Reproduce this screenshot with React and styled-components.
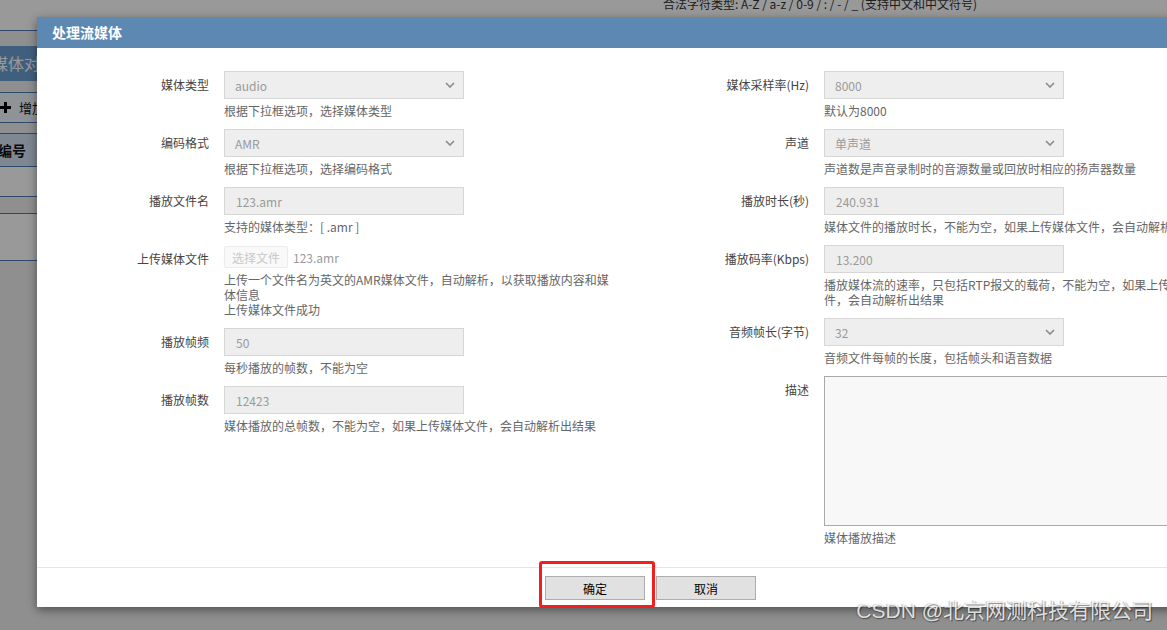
import styled, { createGlobalStyle } from "styled-components";

const leftFields = [
  { label: "媒体类型", kind: "select", value: "audio", help: ["根据下拉框选项，选择媒体类型"] },
  { label: "编码格式", kind: "select", value: "AMR", help: ["根据下拉框选项，选择编码格式"] },
  { label: "播放文件名", kind: "input", value: "123.amr", help: ["支持的媒体类型：[ .amr ]"] },
  {
    label: "上传媒体文件",
    kind: "file",
    value: "123.amr",
    help: ["上传一个文件名为英文的AMR媒体文件，自动解析，以获取播放内容和媒体信息", "上传媒体文件成功"],
  },
  { label: "播放帧频", kind: "input", value: "50", help: ["每秒播放的帧数，不能为空"] },
  {
    label: "播放帧数",
    kind: "input",
    value: "12423",
    help: ["媒体播放的总帧数，不能为空，如果上传媒体文件，会自动解析出结果"],
  },
];

const rightFields = [
  { label: "媒体采样率(Hz)", kind: "select", value: "8000", help: ["默认为8000"] },
  {
    label: "声道",
    kind: "select",
    value: "单声道",
    help: ["声道数是声音录制时的音源数量或回放时相应的扬声器数量"],
  },
  {
    label: "播放时长(秒)",
    kind: "input",
    value: "240.931",
    help: ["媒体文件的播放时长，不能为空，如果上传媒体文件，会自动解析出结果"],
  },
  {
    label: "播放码率(Kbps)",
    kind: "input",
    value: "13.200",
    help: ["播放媒体流的速率，只包括RTP报文的载荷，不能为空，如果上传媒体文件，会自动解析出结果"],
  },
  { label: "音频帧长(字节)", kind: "select", value: "32", help: ["音频文件每帧的长度，包括帧头和语音数据"] },
  { label: "描述", kind: "textarea", value: "", help: ["媒体播放描述"] },
];

function Control({ field }) {
  if (field.kind === "select") {
    return (
      <SelectWrap>
        <Select disabled value={field.value} onChange={() => {}}>
          <option>{field.value}</option>
        </Select>
        <Chevron width="10" height="6" viewBox="0 0 10 6">
          <path d="M1 1l4 4 4-4" fill="none" stroke="#8a8a8a" strokeWidth="1.6" />
        </Chevron>
      </SelectWrap>
    );
  }
  if (field.kind === "file") {
    return (
      <FileLine>
        <FileButton disabled>选择文件</FileButton>
        <FileName>{field.value}</FileName>
      </FileLine>
    );
  }
  if (field.kind === "textarea") {
    return <TextArea readOnly value={field.value} />;
  }
  return <TextInput readOnly value={field.value} />;
}

function FormColumn({ fields }) {
  return (
    <Column>
      {fields.map((field) => (
        <Row key={field.label}>
          <Label>{field.label}</Label>
          <Content>
            <Control field={field} />
            <Help>
              {field.help.map((line) => (
                <div key={line}>{line}</div>
              ))}
            </Help>
          </Content>
        </Row>
      ))}
    </Column>
  );
}

export default function App() {
  return (
    <>
      <GlobalStyle />
      <Screen>
        <Page>
          <TopBar>
            <Hint>合法字符类型: A-Z / a-z / 0-9 / : / - / _ (支持中文和中文符号)</Hint>
          </TopBar>
          <Panel>
            <PanelHead>媒体对象管理</PanelHead>
            <Toolbar>
              <AddButton>
                <svg width="11" height="11" viewBox="0 0 11 11">
                  <path d="M5.5 0v11M0 5.5h11" stroke="#000" strokeWidth="3" />
                </svg>
                增加
              </AddButton>
            </Toolbar>
            <TableHead>编号</TableHead>
            <TableRow $height={30} />
            <TableRow $height={48} $spaced />
          </Panel>
        </Page>

        <Overlay />

        <Modal>
          <ModalHeader>处理流媒体</ModalHeader>
          <ModalBody>
            <FormColumn fields={leftFields} />
            <FormColumn fields={rightFields} />
          </ModalBody>
          <ModalFooter>
            <Highlight>
              <FooterButton>确定</FooterButton>
            </Highlight>
            <FooterButton>取消</FooterButton>
          </ModalFooter>
        </Modal>

        <Watermark>CSDN @北京网测科技有限公司</Watermark>
      </Screen>
    </>
  );
}

const GlobalStyle = createGlobalStyle`
  html, body {
    margin: 0;
    padding: 0;
    overflow: hidden;
  }
  body {
    font-family: "Noto Sans CJK SC", "Noto Sans", sans-serif;
    font-size: 12px;
    color: #333;
  }
  * {
    box-sizing: border-box;
  }
`;

const Screen = styled.div`
  position: relative;
  width: 1167px;
  height: 630px;
  overflow: hidden;
  background: #efefef;
`;

const Page = styled.div`
  display: flex;
  flex-direction: column;
`;

const TopBar = styled.div`
  height: 31px;
  background: #fff;
  border-bottom: 1px solid #4e7cb2;
  overflow: hidden;
`;

const Hint = styled.div`
  margin: -3px 0 0 663px;
  font-size: 12px;
  line-height: 14px;
  color: #333;
`;

const Panel = styled.div`
  display: flex;
  flex-direction: column;
  width: 300px;
  margin: 15px 0 0 -8px;
`;

const PanelHead = styled.div`
  height: 35px;
  line-height: 35px;
  background: #6c9fd2;
  color: #fff;
  font-size: 16px;
`;

const Toolbar = styled.div`
  height: 31px;
  margin-top: 11px;
  display: flex;
  align-items: center;
  background: #eef5fd;
  border-top: 1px solid #4e7cb2;
  border-bottom: 1px solid #4e7cb2;
  padding-left: 8px;
`;

const AddButton = styled.div`
  display: flex;
  align-items: center;
  gap: 8px;
  font-size: 13px;
  color: #111;
`;

const TableHead = styled.div`
  height: 34px;
  margin-top: 10px;
  line-height: 32px;
  background: #d2e1f3;
  border-top: 1px solid #4e7cb2;
  border-bottom: 1px solid #4e7cb2;
  padding-left: 6px;
  font-size: 14px;
  font-weight: bold;
  color: #111;
`;

const TableRow = styled.div`
  height: ${(p) => p.$height}px;
  margin-top: ${(p) => (p.$spaced ? 16 : 0)}px;
  background: #fff;
  border-top: ${(p) => (p.$spaced ? "1px solid #4e7cb2" : "none")};
  border-bottom: 1px solid #4e7cb2;
`;

const Overlay = styled.div`
  position: absolute;
  inset: 0;
  background: rgba(0, 0, 0, 0.4);
`;

const Modal = styled.div`
  position: absolute;
  left: 37px;
  top: 17px;
  width: 1227px;
  background: #fff;
  box-shadow: 0 3px 9px rgba(0, 0, 0, 0.45);
`;

const ModalHeader = styled.div`
  height: 31px;
  padding-left: 15px;
  line-height: 31px;
  background: #5d88b2;
  color: #fff;
  font-size: 14px;
  font-weight: bold;
`;

const ModalBody = styled.div`
  display: grid;
  grid-template-columns: 600px 600px;
  height: 519px;
  padding-top: 23px;
`;

const Column = styled.div`
  display: flex;
  flex-direction: column;
`;

const Row = styled.div`
  display: flex;
  gap: 15px;
  margin-bottom: 11px;
`;

const Label = styled.div`
  width: 172px;
  flex-shrink: 0;
  text-align: right;
  line-height: 28px;
  font-size: 12px;
  color: #444;
`;

const Content = styled.div`
  width: 390px;
  display: flex;
  flex-direction: column;
`;

const fieldBox = `
  width: 240px;
  height: 28px;
  border: 1px solid #d6d6d6;
  background: #eeeeee;
  color: #9a9a9a;
  -webkit-text-fill-color: #9a9a9a;
  opacity: 1;
  font-family: "Noto Sans CJK SC", "Noto Sans", sans-serif;
  font-size: 12px;
  padding: 0 11px;
  margin: 0;
  border-radius: 0;
  outline: none;
`;

const TextInput = styled.input`
  ${fieldBox}
`;

const SelectWrap = styled.div`
  position: relative;
  width: 240px;
  height: 28px;
`;

const Select = styled.select`
  ${fieldBox}
  appearance: none;
  -webkit-appearance: none;
  padding-left: 10px;
`;

const Chevron = styled.svg`
  position: absolute;
  right: 9px;
  top: 11px;
`;

const FileLine = styled.div`
  display: flex;
  align-items: center;
  height: 22px;
  margin-top: 1px;
`;

const FileButton = styled.button`
  width: 64px;
  height: 22px;
  border: 1px solid #ececec;
  background: #f9f9f9;
  color: #c8c8c8;
  font-family: inherit;
  font-size: 12px;
  padding: 0;
  border-radius: 2px;
`;

const FileName = styled.span`
  margin-left: 5px;
  color: #9a9a9a;
  font-size: 12px;
`;

const TextArea = styled.textarea`
  width: 390px;
  height: 150px;
  border: 1px solid #a9a9a9;
  background: #f8f8f8;
  resize: none;
  margin: 0;
  outline: none;
`;

const Help = styled.div`
  margin-top: 4px;
  font-size: 12px;
  line-height: 15px;
  color: #666;
`;

const ModalFooter = styled.div`
  height: 40px;
  border-top: 1px solid #e5e5e5;
  display: flex;
  justify-content: center;
  align-items: flex-start;
  gap: 11px;
  padding-top: 8px;
`;

const Highlight = styled.span`
  position: relative;
  display: flex;

  &::after {
    content: "";
    position: absolute;
    left: -6px;
    top: -15px;
    right: -10px;
    bottom: -8px;
    border: 3px solid #f41e1e;
    border-radius: 3px;
  }
`;

const FooterButton = styled.button`
  width: 100px;
  height: 24px;
  border: 1px solid #adadad;
  background: #e1e1e1;
  color: #000;
  font-family: inherit;
  font-size: 12px;
  padding: 0;
`;

const Watermark = styled.div`
  position: absolute;
  right: 14px;
  bottom: 6px;
  font-family: "Liberation Sans", "Noto Sans CJK SC", sans-serif;
  font-size: 21px;
  line-height: 26px;
  color: rgba(255, 255, 255, 0.82);
  text-shadow: 1px 1px 1px rgba(0, 0, 0, 0.45), -1px 0 1px rgba(0, 0, 0, 0.25);
`;
